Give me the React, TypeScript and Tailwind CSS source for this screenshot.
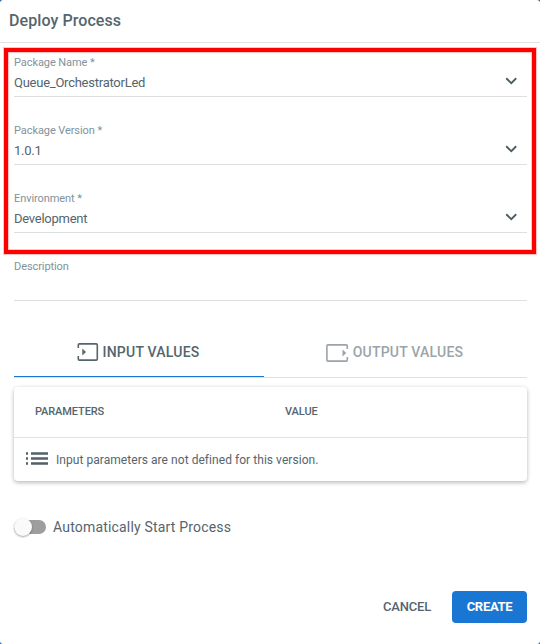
import React from "react";

function Chevron() {
  return (
    <svg width="12" height="8" viewBox="0 0 12 8" fill="none" stroke="#4b5d65" strokeWidth="1.9" className="mr-[10px] mb-[4px]">
      <path d="M1.2 1.3 L6.3 6.1 L11.2 1.3" />
    </svg>
  );
}

function Field({ label, value, select = false }: { label: string; value?: string; select?: boolean }) {
  return (
    <div className="flex h-[41px] flex-col border-b border-[#dedfe0]">
      <label className="h-[14px] text-[11px] leading-[14px] tracking-[-0.08px] text-[#81929b]">{label}</label>
      <div className="mt-[3px] flex h-[20px] items-center justify-between text-[13px] leading-[20px] tracking-[-0.25px] text-[#55656d]">
        <span>{value}</span>
        {select && <Chevron />}
      </div>
    </div>
  );
}

function InputIcon() {
  return (
    <svg width="22" height="18" viewBox="0 0 22 18" fill="none" stroke="currentColor" strokeWidth="1.6">
      <path d="M1.3 5V2Q1.3 .9 2.4 .9H19.2Q20.3 .9 20.3 2V16Q20.3 17.1 19.2 17.1H2.4Q1.3 17.1 1.3 16V13" />
      <path d="M5.3 5.5L9 9L5.3 12.5Z" fill="currentColor" stroke="none" />
    </svg>
  );
}

function OutputIcon() {
  return (
    <svg width="23" height="18" viewBox="0 0 23 18" fill="none" stroke="currentColor" strokeWidth="1.6">
      <path d="M21.3 5V2Q21.3 .9 20.2 .9H2Q.9 .9 .9 2V16Q.9 17.1 2 17.1H20.2Q21.3 17.1 21.3 16V13" />
      <path d="M16.5 5.5L20.3 9L16.5 12.5Z" fill="currentColor" stroke="none" />
    </svg>
  );
}

function ListIcon() {
  return (
    <svg width="22" height="14" viewBox="0 0 22 14" fill="#526069" className="-mt-[2px]">
      <path d="M0 .3h2v2.4H0zM0 5.3h2v2.4H0zM0 10.3h2v2.4H0zM5 .3h17v2.4H5zM5 5.3h17v2.4H5zM5 10.3h17v2.4H5z" />
    </svg>
  );
}

export default function App() {
  return (
    <div className="relative h-[644px] w-[540px] overflow-hidden bg-[#1c4f91] font-[Roboto,sans-serif] text-[#55656d]">
      <div className="flex h-full flex-col rounded-[3px] bg-white">
        <header className="flex h-[43px] items-center border-b border-[#e0e2e3] pl-[9px] text-[16px] leading-[20px] font-medium">
          <h1 className="tracking-[0.08px]">Deploy Process</h1>
        </header>
        <main className="flex flex-col px-[14px] pr-[13px] pt-[13px]">
          <div className="flex flex-col gap-[27px]">
            <Field label="Package Name *" value="Queue_OrchestratorLed" select />
            <Field label="Package Version *" value="1.0.1" select />
            <Field label="Environment *" value="Development" select />
            <Field label="Description" />
          </div>
          <div className="mt-[27px] flex h-[50px] border-b border-[#dfe1e2] text-[14px] font-medium tracking-[0.22px]">
            <button className="flex h-[49px] w-[250px] items-center justify-center gap-[4px] border-b border-[#1976d2] pr-[2px]">
              <InputIcon />
              <span>INPUT VALUES</span>
            </button>
            <button className="flex h-[49px] flex-1 items-center justify-center gap-[4px] pr-[2px] text-[#9ba4a8]">
              <OutputIcon />
              <span>OUTPUT VALUES</span>
            </button>
          </div>
          <section className="mt-[9px] h-[94px] rounded-[4px] bg-white shadow-[0_2px_4px_rgba(0,0,0,0.22),0_0_4px_rgba(0,0,0,0.08)]">
            <div className="flex h-[51px] items-center border-b border-[#dfe1e2] pl-[21px] text-[11px] font-medium tracking-[-0.1px]">
              <span className="w-[250px]">PARAMETERS</span>
              <span>VALUE</span>
            </div>
            <div className="flex h-[43px] items-center gap-[8px] pl-[12px] text-[12px] tracking-[0.05px]">
              <ListIcon />
              <span>Input parameters are not defined for this version.</span>
            </div>
          </section>
          <div className="mt-[36px] flex h-[20px] items-center">
            <div className="flex h-[14px] w-[32px] items-center rounded-full bg-[#9e9e9e]">
              <span className="h-[18px] w-[18px] shrink-0 rounded-full bg-[#fafafa] shadow-[0_1px_2px_rgba(0,0,0,0.35)]" />
            </div>
            <span className="ml-[7px] text-[14px] tracking-[0.18px]">Automatically Start Process</span>
          </div>
        </main>
        <footer className="mt-[54px] flex h-[32px] items-center justify-end pr-[13px] text-[13px] font-medium tracking-[-0.2px]">
          <button className="mr-[21px]">CANCEL</button>
          <button className="h-[32px] w-[75px] rounded-[4px] bg-[#1976d2] font-bold tracking-[-0.3px] text-white">CREATE</button>
        </footer>
      </div>
      <div className="pointer-events-none absolute top-[48px] left-[4px] h-[206px] w-[532px] border-4 border-[#ff0000] shadow-[0_0_0_1px_#ffc4c4,inset_0_0_0_1px_#ffc4c4]" />
    </div>
  );
}
